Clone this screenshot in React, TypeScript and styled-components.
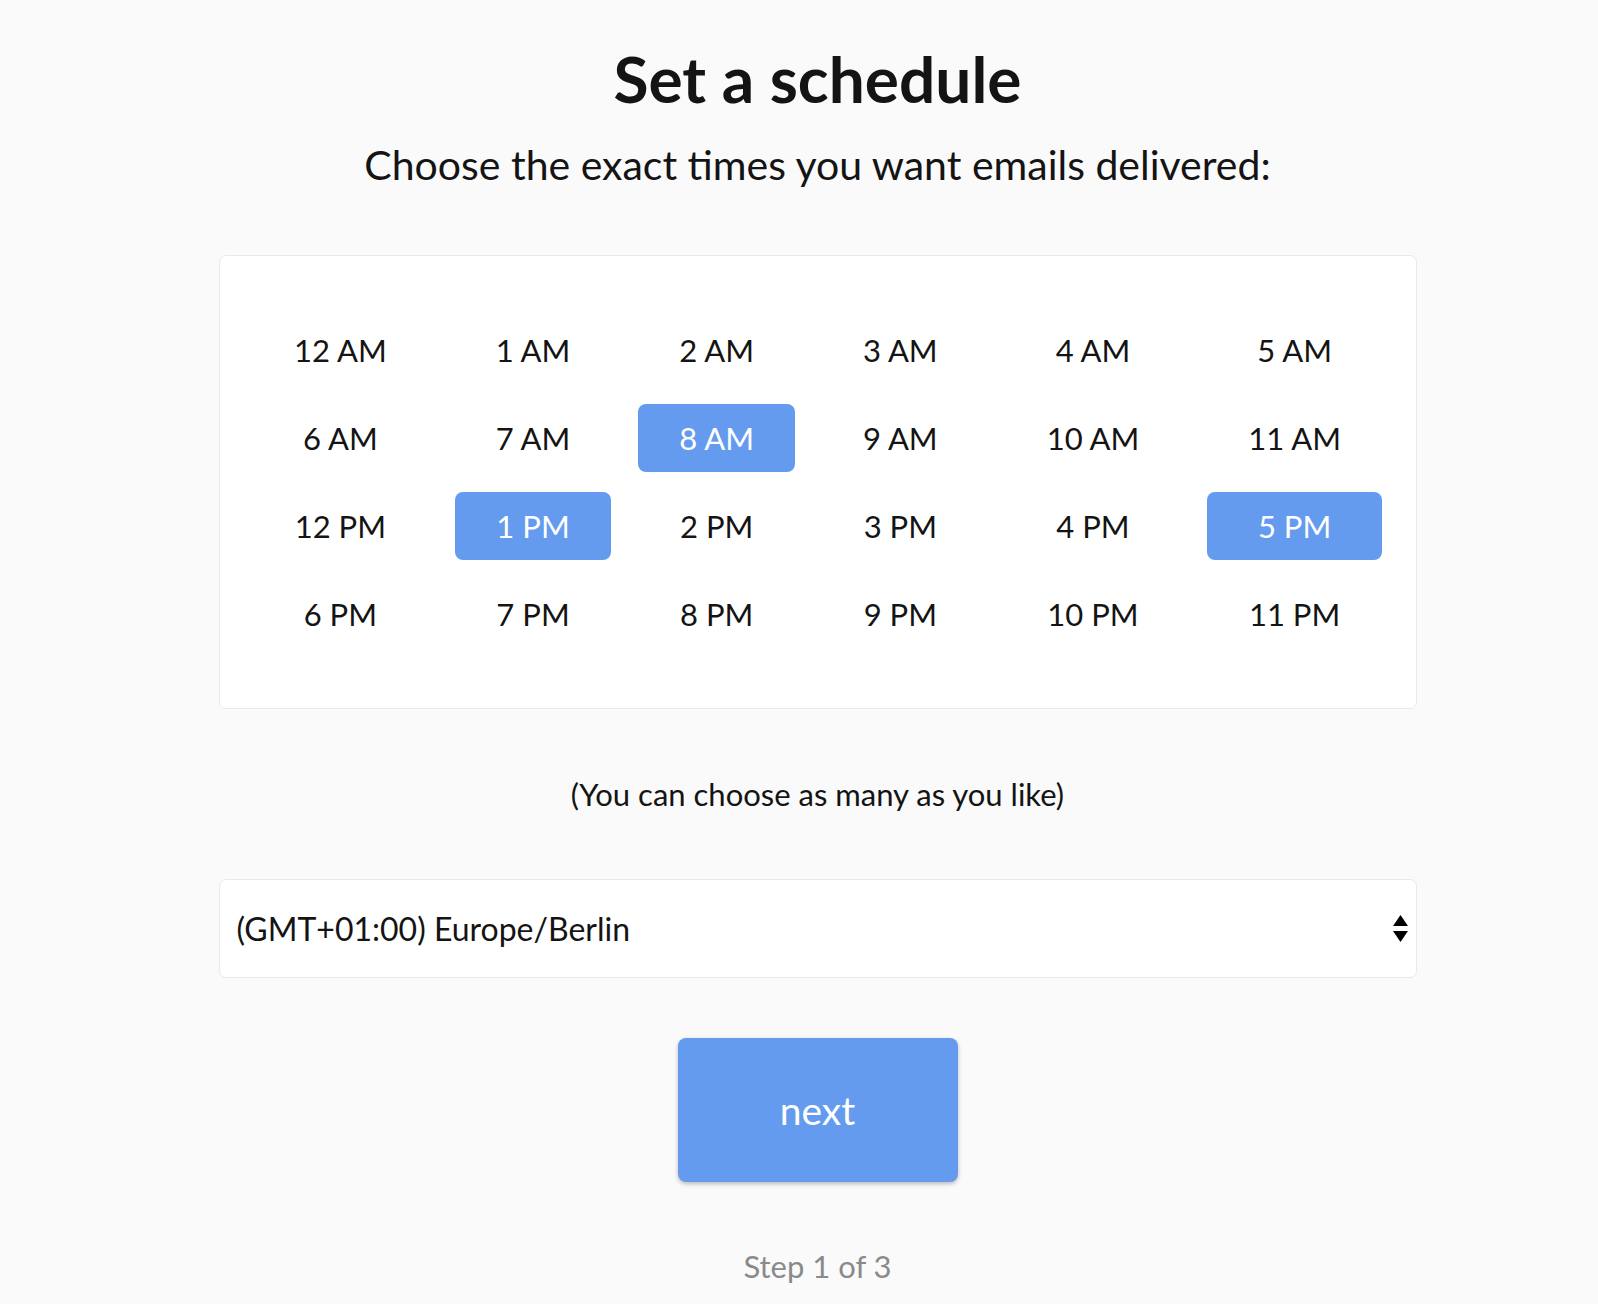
import { useState } from "react";
import styled, { createGlobalStyle } from "styled-components";

const HOURS = [
  "12 AM", "1 AM", "2 AM", "3 AM", "4 AM", "5 AM",
  "6 AM", "7 AM", "8 AM", "9 AM", "10 AM", "11 AM",
  "12 PM", "1 PM", "2 PM", "3 PM", "4 PM", "5 PM",
  "6 PM", "7 PM", "8 PM", "9 PM", "10 PM", "11 PM",
];

const GlobalStyle = createGlobalStyle`
  html, body {
    margin: 0;
    padding: 0;
    background: #fafafa;
  }
  body {
    font-family: Lato, "Open Sans", sans-serif;
    color: #141414;
  }
`;

const App = () => {
  const [selected, setSelected] = useState<string[]>(["8 AM", "1 PM", "5 PM"]);
  const [zone, setZone] = useState<string>("Europe/Berlin");

  const toggleHour = (hour: string) => {
    setSelected((prev) =>
      prev.includes(hour) ? prev.filter((h) => h !== hour) : [...prev, hour]
    );
  };

  return (
    <Page>
      <GlobalStyle />
      <Title>Set a schedule</Title>
      <Subtitle>Choose the exact times you want emails delivered:</Subtitle>
      <Card>
        <HourGrid>
          {HOURS.map((hour) => (
            <HourButton
              key={hour}
              type="button"
              $active={selected.includes(hour)}
              onClick={() => toggleHour(hour)}
            >
              {hour}
            </HourButton>
          ))}
        </HourGrid>
      </Card>
      <Note>(You can choose as many as you like)</Note>
      <SelectWrap>
        <ZoneSelect value={zone} onChange={(e) => setZone(e.target.value)}>
          <option value="Europe/London">(GMT+00:00) Europe/London</option>
          <option value="Europe/Berlin">(GMT+01:00) Europe/Berlin</option>
          <option value="Europe/Athens">(GMT+02:00) Europe/Athens</option>
        </ZoneSelect>
        <Arrows width="15" height="28" viewBox="0 0 15 28" aria-hidden="true">
          <path d="M7.5 0 L15 11 L0 11 Z" fill="#000" />
          <path d="M0 16 L15 16 L7.5 27 Z" fill="#000" />
        </Arrows>
      </SelectWrap>
      <NextButton type="button">next</NextButton>
      <Step>Step 1 of 3</Step>
    </Page>
  );
};

const Page = styled.div`
  display: flex;
  flex-direction: column;
  align-items: center;
  padding: 47px 0 40px 37px;
  min-height: 1304px;
  box-sizing: border-box;
`;

const Title = styled.h1`
  margin: 0;
  font-size: 64px;
  line-height: 64px;
  font-weight: 700;
  color: #141414;
`;

const Subtitle = styled.p`
  margin: 33px 0 0;
  font-size: 41px;
  line-height: 41px;
  color: #141414;
`;

const Card = styled.div`
  margin-top: 70px;
  width: 1198px;
  box-sizing: border-box;
  padding: 60px 0;
  background: #fff;
  border: 1px solid #e9e9e9;
  border-radius: 7px;
  display: flex;
  justify-content: center;
`;

const HourGrid = styled.div`
  display: grid;
  grid-template-columns: repeat(6, auto);
  column-gap: 27px;
  row-gap: 20px;
`;

const HourButton = styled.button<{ $active: boolean }>`
  height: 68px;
  padding: 0 41px;
  border: none;
  border-radius: 8px;
  font-family: inherit;
  font-size: 31px;
  white-space: nowrap;
  cursor: pointer;
  background: ${({ $active }) => ($active ? "#649bef" : "transparent")};
  color: ${({ $active }) => ($active ? "#fff" : "#141414")};
`;

const Note = styled.p`
  margin: 70px 0 0;
  font-size: 31px;
  line-height: 31px;
`;

const SelectWrap = styled.div`
  position: relative;
  margin-top: 69px;
  width: 1198px;
`;

const ZoneSelect = styled.select`
  appearance: none;
  width: 100%;
  height: 99px;
  box-sizing: border-box;
  padding: 0 40px 0 17px;
  background: #fff;
  border: 1px solid #e9e9e9;
  border-radius: 7px;
  font-family: inherit;
  font-size: 32px;
  color: #141414;
  outline: none;
`;

const Arrows = styled.svg`
  position: absolute;
  right: 9px;
  top: 50%;
  transform: translateY(-50%);
  pointer-events: none;
`;

const NextButton = styled.button`
  margin-top: 60px;
  width: 280px;
  height: 144px;
  border: none;
  border-radius: 8px;
  background: #649bef;
  color: #fff;
  font-family: inherit;
  font-size: 39px;
  cursor: pointer;
  box-shadow: 0 2px 4px rgba(0, 0, 0, 0.25);
`;

const Step = styled.p`
  margin: 69px 0 0;
  font-size: 31px;
  line-height: 31px;
  color: #8a8a8a;
`;

export default App;
